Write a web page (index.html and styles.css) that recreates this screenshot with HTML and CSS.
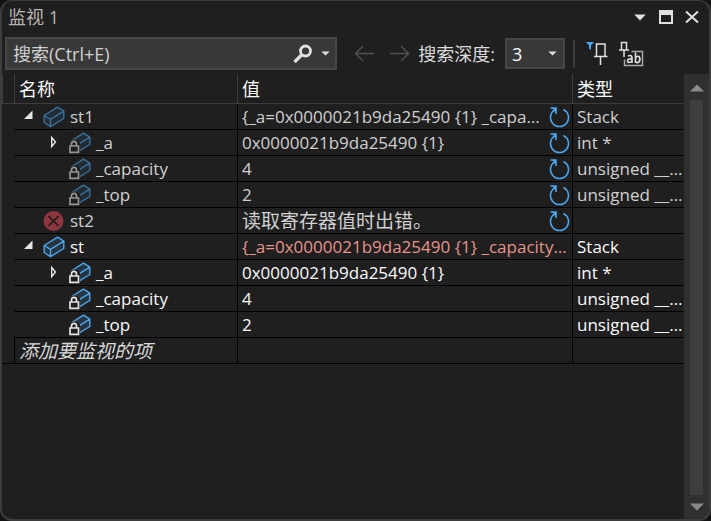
FILE: index.html
```html
<!DOCTYPE html>
<html lang="zh-CN">
<head>
    <meta charset="UTF-8">
    <meta name="viewport" content="width=device-width, initial-scale=1.0">
    <title>监视 1</title>
    <link rel="stylesheet" href="styles.css">
</head>
<body>
    <!-- shared icons -->
    <svg class="icon-defs">
        <symbol id="cube" viewBox="0 0 22 22">
            <path d="M1 10 L14.500 1 L21 5 L21 12.500 L7.500 20.500 L1 16.500 Z" fill="#4fb3ff" fill-opacity=".15"/>
            <path d="M1.200 9.500 L14.500 1.200 L20.800 5.200 L7.500 13.300 Z M1.200 9.500 V16.500 L7.500 20.700 L20.800 12.500 V5.200 M7.500 13.300 V20.700" fill="none" stroke="#4ba6ee" stroke-width="1.400" stroke-linejoin="round"/>
        </symbol>
        <symbol id="locked" viewBox="0 0 22 22">
            <use href="#cube" width="22" height="22"/>
            <path d="M-1 22 V11 Q0 8 5 7.500 Q10 8 11 11 V22 Z" fill="#1f1f1f"/>
            <path d="M2.500 14 V12 Q2.500 9.300 5 9.300 Q7.500 9.300 7.500 12 V14 M1 14 H9.500 V20.300 H1 Z" fill="none" stroke="#e4e4e4" stroke-width="1.700"/>
        </symbol>
        <symbol id="error" viewBox="0 0 22 22">
            <circle cx="10.500" cy="11" r="10" fill="#8e3640"/>
            <path d="M5.500 6 L15.500 16 M15.500 6 L5.500 16" stroke="#1b1b1b" stroke-width="1.600"/>
        </symbol>
        <symbol id="opened" viewBox="0 0 20 20">
            <path d="M13.500 3.500 V12 H5 Z" fill="#e6e6e6"/>
        </symbol>
        <symbol id="closed" viewBox="0 0 20 20">
            <path d="M6.700 4.500 L10.500 9 L6.700 13.500 Z" fill="none" stroke="#e6e6e6" stroke-width="1.400"/>
        </symbol>
        <symbol id="refresh" viewBox="0 0 22 22">
            <path d="M7.500 3.500 A9 9 0 1 0 15.500 3.500 M2.500 2 H8 V8" fill="none" stroke="#4ba6ee" stroke-width="1.600"/>
            <path d="M4 2 H8 V6 Z" fill="#4ba6ee"/>
        </symbol>
        <symbol id="down" viewBox="0 0 10 6">
            <path d="M0 0.500 H10 L5 5.500 Z" fill="currentColor"/>
        </symbol>
    </svg>

    <div class="panel">
        <div class="title-bar">
            <h1 class="title">监视 1</h1>
            <button class="title-btn" aria-label="窗口位置"><svg width="12" height="7"><use href="#down"/></svg></button>
            <button class="title-btn" aria-label="最大化"><svg width="14" height="14"><path d="M1 1 H13 V13 H1 Z" fill="none" stroke="#e0e0e0" stroke-width="2"/><path d="M0 0 H14 V5 H0 Z" fill="#e0e0e0"/></svg></button>
            <button class="title-btn" aria-label="关闭"><svg width="14" height="14"><path d="M1 1.500 L13 12.500 M13 1.500 L1 12.500" stroke="#e0e0e0" stroke-width="2"/></svg></button>
        </div>

        <div class="toolbar">
            <div class="search-box">
                <input class="search-input" type="text" placeholder="搜索(Ctrl+E)" aria-label="搜索">
                <button class="search-btn" aria-label="搜索"><svg width="20" height="20"><circle cx="12.500" cy="7" r="5" fill="none" stroke="#e0e0e0" stroke-width="2.800"/><path d="M9 10.500 L1.500 18" stroke="#e0e0e0" stroke-width="3.400"/></svg></button>
                <button class="search-btn" aria-label="搜索选项"><svg width="9" height="5"><use href="#down"/></svg></button>
            </div>
            <button class="nav-btn" aria-label="查找上一个"><svg width="20" height="17"><path d="M20 8.500 H1 M9 1 L1.500 8.500 L9 16" fill="none" stroke="currentColor" stroke-width="1.500"/></svg></button>
            <button class="nav-btn" aria-label="查找下一个"><svg width="20" height="17"><path d="M0 8.500 H19 M11 1 L18.500 8.500 L11 16" fill="none" stroke="currentColor" stroke-width="1.500"/></svg></button>
            <label class="depth-label" for="depth">搜索深度:</label>
            <div class="depth-box">
                <select class="depth" id="depth">
                    <option>1</option>
                    <option>2</option>
                    <option selected>3</option>
                    <option>4</option>
                </select>
                <svg class="depth-arrow" width="9" height="5"><use href="#down"/></svg>
            </div>
            <span class="separator"></span>
            <button class="tool-btn" aria-label="筛选固定项"><svg width="24" height="24"><path d="M1 0 H9 L6 3.500 V8 L4 6.500 V3.500 Z" fill="#4ba6ee"/><path d="M11.500 14 V2 H20 V14 M9 14.500 H22.500 M15.500 14.500 V23" fill="none" stroke="#e0e0e0" stroke-width="1.500"/></svg></button>
            <button class="tool-btn" aria-label="固定名称"><svg width="26" height="26"><path d="M3.500 8.500 V1.500 H8.500 V8.500 M1 9 H11 M6 9 V16" fill="none" stroke="#e0e0e0" stroke-width="1.500"/><path d="M13.500 10.500 H24.500 V24.500 H6.500 V18.500" fill="none" stroke="#a8a8a8" stroke-width="1.500"/><path d="M10 15 Q14 13.500 14 17 V22 M14 18 Q9.500 17.500 9.500 20.200 Q10.500 23 14 20 M17.500 11.500 V22 M17.500 17 Q19 14.500 21 15.500 Q23 18 21 21 Q19 22.500 17.500 20.500" fill="none" stroke="#e0e0e0" stroke-width="1.600"/></svg></button>
        </div>

        <div class="content">
            <div class="grid">
                <table class="watch">
                    <colgroup>
                        <col class="col-gutter">
                        <col class="col-name">
                        <col class="col-value">
                        <col class="col-type">
                    </colgroup>
                    <thead>
                        <tr><th></th><th>名称</th><th>值</th><th>类型</th></tr>
                    </thead>
                    <tbody>
                        <tr class="stale">
                            <td></td>
                            <td><div class="name"><button class="expander" aria-label="折叠"><svg><use href="#opened"/></svg></button><svg class="icon"><use href="#cube"/></svg>st1</div></td>
                            <td><div class="value"><span>{_a=0x0000021b9da25490 {1} _capacity=4 _top=2 }</span><button class="refresh" aria-label="刷新"><svg><use href="#refresh"/></svg></button></div></td>
                            <td>Stack</td>
                        </tr>
                        <tr class="stale">
                            <td></td>
                            <td><div class="name child"><button class="expander" aria-label="展开"><svg><use href="#closed"/></svg></button><svg class="icon"><use href="#locked"/></svg>_a</div></td>
                            <td><div class="value"><span>0x0000021b9da25490 {1}</span><button class="refresh" aria-label="刷新"><svg><use href="#refresh"/></svg></button></div></td>
                            <td>int *</td>
                        </tr>
                        <tr class="stale">
                            <td></td>
                            <td><div class="name child"><span class="expander"></span><svg class="icon"><use href="#locked"/></svg>_capacity</div></td>
                            <td><div class="value"><span>4</span><button class="refresh" aria-label="刷新"><svg><use href="#refresh"/></svg></button></div></td>
                            <td>unsigned __int64</td>
                        </tr>
                        <tr class="stale">
                            <td></td>
                            <td><div class="name child"><span class="expander"></span><svg class="icon"><use href="#locked"/></svg>_top</div></td>
                            <td><div class="value"><span>2</span><button class="refresh" aria-label="刷新"><svg><use href="#refresh"/></svg></button></div></td>
                            <td>unsigned __int64</td>
                        </tr>
                        <tr class="failed">
                            <td></td>
                            <td><div class="name"><span class="expander"></span><svg class="icon"><use href="#error"/></svg>st2</div></td>
                            <td><div class="value"><span class="message">读取寄存器值时出错。</span><button class="refresh" aria-label="刷新"><svg><use href="#refresh"/></svg></button></div></td>
                            <td></td>
                        </tr>
                        <tr>
                            <td></td>
                            <td><div class="name"><button class="expander" aria-label="折叠"><svg><use href="#opened"/></svg></button><svg class="icon"><use href="#cube"/></svg>st</div></td>
                            <td class="changed">{_a=0x0000021b9da25490 {1} _capacity=4 _top=2 }</td>
                            <td>Stack</td>
                        </tr>
                        <tr>
                            <td></td>
                            <td><div class="name child"><button class="expander" aria-label="展开"><svg><use href="#closed"/></svg></button><svg class="icon"><use href="#locked"/></svg>_a</div></td>
                            <td>0x0000021b9da25490 {1}</td>
                            <td>int *</td>
                        </tr>
                        <tr>
                            <td></td>
                            <td><div class="name child"><span class="expander"></span><svg class="icon"><use href="#locked"/></svg>_capacity</div></td>
                            <td>4</td>
                            <td>unsigned __int64</td>
                        </tr>
                        <tr>
                            <td></td>
                            <td><div class="name child"><span class="expander"></span><svg class="icon"><use href="#locked"/></svg>_top</div></td>
                            <td>2</td>
                            <td>unsigned __int64</td>
                        </tr>
                        <tr class="add-row">
                            <td></td>
                            <td>添加要监视的项</td>
                            <td></td>
                            <td></td>
                        </tr>
                    </tbody>
                </table>
            </div>
            <div class="scrollbar">
                <svg width="14" height="8"><path d="M0 7.500 L7 0.500 L14 7.500 Z" fill="#8a8a8a"/></svg>
                <div class="thumb"></div>
                <svg width="14" height="8"><path d="M0 0.500 L7 7.500 L14 0.500 Z" fill="#8a8a8a"/></svg>
            </div>
        </div>
    </div>
</body>
</html>
```

FILE: styles.css
```css
* {
    box-sizing: border-box;
}
body {
    margin: 0;
    background-color: #141414;
    font-family: "Open Sans", "Noto Sans CJK SC", sans-serif;
    font-size: 17px;
    line-height: 24px;
    color: #fafafa;
}
button, input, select {
    font: inherit;
    color: inherit;
    margin: 0;
    padding: 0;
    border: none;
    background: none;
}
button {
    display: flex;
    align-items: center;
    justify-content: center;
    flex: none;
}
svg {
    display: block;
    flex: none;
}
.icon-defs {
    position: absolute;
    width: 0;
    height: 0;
}
.panel {
    display: flex;
    flex-direction: column;
    height: 100vh;
    border: 2px solid #3d3d3d;
    border-top-width: 1px;
    border-radius: 12px;
    background-color: #1f1f1f;
    overflow: hidden;
}

/* title bar */
.title-bar {
    display: flex;
    align-items: center;
    gap: 2px;
    height: 32px;
    padding: 0 5px 0 6px;
}
.title {
    flex: 1;
    margin: 0;
    font-size: 18px;
    font-weight: normal;
    color: #b8b4b4;
}
.title-btn {
    width: 24px;
    height: 24px;
    color: #e0e0e0;
}

/* toolbar */
.toolbar {
    display: flex;
    align-items: center;
    height: 41px;
    padding: 0 61px 0 3px;
    font-size: 18px;
    color: #dcdcdc;
}
.search-box {
    display: flex;
    flex: 1;
    height: 33px;
    margin-right: 9px;
    border: 2px solid #464646;
    background-color: #383838;
}
.search-input {
    flex: 1;
    min-width: 0;
    padding-left: 6px;
    outline: none;
}
.search-input::placeholder {
    color: #d0d0d0;
    opacity: 1;
}
.search-btn {
    width: 20px;
    color: #e0e0e0;
}
.search-btn:first-of-type {
    width: 24px;
}
.nav-btn {
    width: 36px;
    height: 28px;
    color: #505050;
}
.depth-label {
    margin-right: 10px;
}
.depth-box {
    display: grid;
    align-items: center;
    width: 60px;
    height: 31px;
    border: 2px solid #464646;
    background-color: #383838;
}
.depth, .depth-arrow {
    grid-area: 1 / 1;
}
.depth {
    appearance: none;
    height: 27px;
    padding-left: 5px;
    color: #fafafa;
}
.depth-arrow {
    justify-self: end;
    margin-right: 6px;
    pointer-events: none;
}
.separator {
    width: 2px;
    height: 28px;
    margin: 0 5px 0 8px;
    background-color: #3d3d3d;
}
.tool-btn {
    width: 34px;
    height: 30px;
}

/* watch grid */
.content {
    display: flex;
    flex: 1;
    min-height: 0;
}
.grid {
    flex: 1;
    min-width: 0;
    overflow: hidden;
}
.watch {
    width: 100%;
    table-layout: fixed;
    border-spacing: 0;
}
.col-gutter {
    width: 12px;
}
.col-name {
    width: 223px;
}
.col-type {
    width: 112px;
}
.watch th {
    height: 30px;
    padding: 0 4px;
    border-left: 1px solid #3d3d3d;
    border-bottom: 1px solid #3d3d3d;
    font-size: 18px;
    font-weight: normal;
    text-align: left;
}
.watch td {
    height: 26px;
    padding: 0 0 0 4px;
    border-left: 1px solid #000;
    border-bottom: 1px solid #000;
    overflow: hidden;
    white-space: nowrap;
    text-overflow: ellipsis;
}
.watch th:first-child, .watch td:first-child {
    padding: 0;
}
.watch td:first-child {
    border-color: transparent;
}
.watch td:nth-child(2) {
    border-left-color: transparent;
}
.watch .add-row td {
    border-color: #000;
}
.watch .add-row td:first-child {
    border-left: none;
}
.add-row {
    font-size: 19px;
    font-style: italic;
    color: #d8d8d8;
}
.stale, .failed {
    color: #d0d0d0;
}
.stale .icon {
    opacity: 0.6;
}
.changed {
    color: #e8938c;
}
.name {
    display: flex;
    align-items: center;
    gap: 5px;
    height: 24px;
}
.child {
    padding-left: 26px;
}
.expander {
    width: 19px;
    height: 20px;
    flex: none;
}
.expander svg {
    width: 20px;
    height: 20px;
}
.icon {
    width: 22px;
    height: 22px;
}
.value {
    display: flex;
    align-items: center;
    gap: 6px;
    height: 24px;
    padding-right: 2px;
}
.value span {
    flex: 1;
    overflow: hidden;
    text-overflow: ellipsis;
}
.value .message {
    font-size: 19px;
}
.refresh svg {
    width: 22px;
    height: 22px;
}

/* scrollbar */
.scrollbar {
    display: flex;
    flex-direction: column;
    align-items: center;
    gap: 8px;
    width: 25px;
    padding: 10px 0 8px;
    background-color: #303030;
}
.thumb {
    flex: 1;
    width: 13px;
    background-color: #3e3e3e;
}
```
